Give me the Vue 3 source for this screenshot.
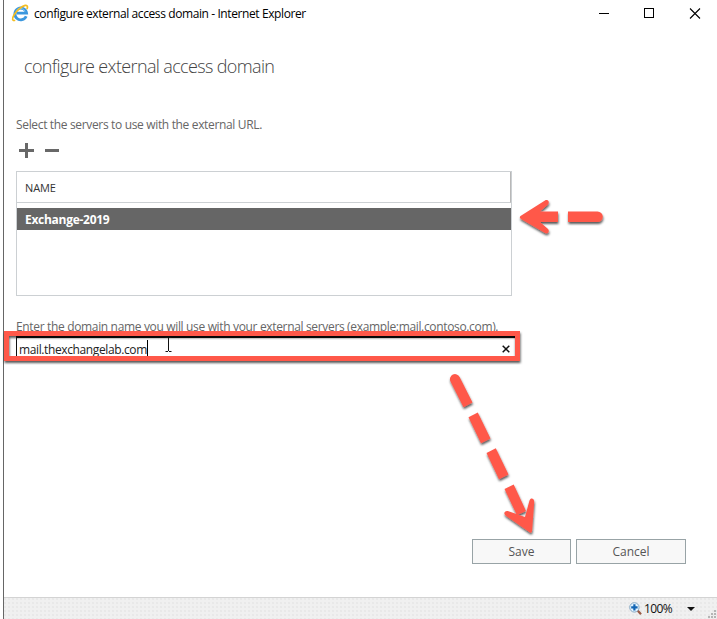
<script setup>
import { ref } from 'vue'

const servers = ref(['Exchange-2019'])
const domain = ref('mail.thexchangelab.com')
</script>

<template>
  <div class="window">
    <header class="titlebar">
      <svg class="logo" width="18" height="18" viewBox="0 0 18 18">
        <path d="M15.200 12.200A5.900 5.900 0 1 1 15.600 9.200H5.600" fill="none" stroke="#3b97de" stroke-width="2.800" />
        <path d="M14.200 7.400A5.200 5.200 0 0 0 5 6.800" fill="none" stroke="#75c5f5" stroke-width="1" />
        <path d="M4.200 16.300C1.200 17.300 .8 14.700 3 11C5.500 6.700 10.500 2.300 14.200 1.400C16.600 .9 17 2.900 15.900 5.200" fill="none" stroke="#f3bd22" stroke-width="1.700" />
      </svg>
      <span class="title">configure external access domain - Internet Explorer</span>
      <svg class="controls" width="104" height="12" viewBox="0 0 104 12" fill="none" stroke="#000">
        <path d="M0 5.500H10" />
        <rect x="45.500" y=".5" width="9" height="9" />
        <path d="M91 0.500L101 10.500M101 .5L91 10.500" stroke-width="1.100" />
      </svg>
    </header>

    <main class="content">
      <h1><span>configure external access domain</span></h1>
      <p class="label select-label">Select the servers to use with the external URL.</p>
      <div class="tools">
        <svg width="42" height="16" viewBox="0 0 42 16" fill="none" stroke="#686868" stroke-width="3">
          <path d="M0 8.500H15M7.500 1V16M26 8.500H40" />
        </svg>
      </div>
      <section class="grid">
        <div class="grid-head"><span>NAME</span></div>
        <div v-for="server in servers" :key="server" class="grid-row"><span>{{ server }}</span></div>
      </section>
      <p class="label domain-label">Enter the domain name you will use with your external servers (example:mail.contoso.com).</p>
      <div class="field">
        <span class="value">{{ domain }}</span><i class="caret"></i>
        <svg class="clear" width="8" height="8" viewBox="0 0 8 8"><path d="M.7.7L7.3 7.3M7.3.7L.7 7.3" stroke="#111" stroke-width="1.500" /></svg>
      </div>
      <div class="actions">
        <button class="save"><span>Save</span></button>
        <button class="cancel"><span>Cancel</span></button>
      </div>
    </main>

    <footer class="statusbar">
      <svg class="zoom-icon" width="14" height="14" viewBox="0 0 14 14">
        <path d="M8.600 8.500L12 12.200" stroke="#9a5b45" stroke-width="2.300" />
        <circle cx="5.400" cy="5.400" r="4.700" fill="#e4f4ff" stroke="#87a9c4" />
        <path d="M5.400 2.200V8.600M2.200 5.400H8.600" stroke="#1265b4" stroke-width="2.200" />
      </svg>
      <span class="percent">100%</span>
      <svg class="chevron" width="8" height="4" viewBox="0 0 8 4"><path d="M0 0H8L4 4Z" fill="#111" /></svg>
      <svg class="grip" width="9" height="9" viewBox="0 0 9 9" fill="#b5b5b5">
        <path d="M6 0h2v2H6zM3 3h2v2H3zM6 3h2v2H6zM0 6h2v2H0zM3 6h2v2H3zM6 6h2v2H6z" />
      </svg>
    </footer>

    <svg class="annotations" width="717" height="619" viewBox="0 0 717 619">
      <defs>
        <filter id="shadow" x="-20%" y="-20%" width="140%" height="150%">
          <feDropShadow dx="0.5" dy="2" stdDeviation="0.9" flood-color="#000" flood-opacity=".65" />
        </filter>
      </defs>
      <g filter="url(#shadow)">
        <rect x="6.500" y="333.500" width="511" height="25" fill="none" stroke="#ff584a" stroke-width="5" />
      </g>
      <path d="M168.500 338V351M165.500 337.500H168M169 337.500H171.500M165.500 351.500H168M169 351.500H171.500" fill="none" stroke="#111" />
      <g filter="url(#shadow)" fill="#ff584a">
        <path d="M520.500 216C519.500 217 519.500 218 521 219L545 233C548 234.500 550 231 548 229L540 222H558V211.500H540L548 204.500C550 202 548 199 545 200.500Z" />
        <path d="M568 211.500H597.500A5.250 5.250 0 0 1 597.500 222H568Z" />
      </g>
      <g filter="url(#shadow)" fill="#ff584a">
        <path d="M450.400 381.300A5 5 0 0 1 459.600 377L472.500 402.500L463.500 407.300Z" />
        <path d="M468.500 417.200L477.800 412.600L490.500 438.500L481 443.300Z" />
        <path d="M486.500 453L495.800 448.300L508.500 474.500L499 479.300Z" />
        <path d="M504.500 489L513.700 484.500L526 511L517 515.200Z" />
        <path d="M532 531.500L534.200 502C534.300 498 530.500 497.300 529.500 500.500L525 517L508.500 511.200C505 510 502.800 513.300 505.500 515.500L528.500 531.500C530 533 531.700 533 532 531.500Z" />
      </g>
    </svg>
  </div>
</template>

<style>
body {
  margin: 0;
  background: #fff;
}
</style>

<style scoped>
.window {
  position: relative;
  box-sizing: border-box;
  width: 717px;
  height: 619px;
  padding-left: 3px;
  overflow: hidden;
  display: flex;
  flex-direction: column;
  font-family: "Open Sans", "Noto Sans", sans-serif;
  color: #666;
  background: linear-gradient(90deg, transparent 3px, #666 3px 4px, #fff 4px);
}
span, .label { white-space: nowrap; }
.titlebar {
  height: 28px;
  display: flex;
  align-items: center;
  padding-left: 8px;
  color: #000;
  font-size: 12px;
}
.logo { margin-top: -2px; }
.title {
  margin-left: 5px;
  margin-top: -1px;
  letter-spacing: -.4px;
}
.controls { margin-left: auto; margin-right: 14px; margin-top: -1px; }
.content {
  display: flex;
  flex-direction: column;
  padding-left: 13px;
  height: 569px;
}
h1 {
  margin: 25px 0 0 8px;
  font-size: 18px;
  line-height: 26px;
  font-weight: 300;
  letter-spacing: -.64px;
  color: #444;
}
.label {
  margin: 0;
  font-size: 12px;
  line-height: 18px;
  letter-spacing: -.34px;
}
.select-label { margin-top: 37px; }
.tools { height: 37px; padding: 8px 0 0 3px; box-sizing: border-box; }
.tools svg { display: block; }
.grid {
  box-sizing: border-box;
  width: 496px;
  height: 125px;
  border: 1px solid #ccd0d3;
}
.grid-head {
  display: flex;
  align-items: center;
  box-sizing: border-box;
  height: 31px;
  padding-left: 8px;
  margin-bottom: 5px;
  border-bottom: 1px solid #ccd0d3;
  border-right: 1px solid #b8b8b8;
  color: #333;
  font-size: 11px;
  letter-spacing: -.1px;
}
.grid-row {
  display: flex;
  align-items: center;
  height: 22px;
  padding-left: 8px;
  background: #666;
  color: #fff;
  font-size: 12px;
  font-weight: 700;
  letter-spacing: -.28px;
}
.domain-label { margin-top: 22px; }
.field {
  display: flex;
  align-items: center;
  box-sizing: border-box;
  width: 499px;
  height: 22px;
  border-left: 1px solid #111;
  border-top: 2px solid #111;
  padding-left: 2px;
  padding-right: 5px;
  color: #222;
  font-size: 12px;
  letter-spacing: -.38px;
}
.value { padding-top: 2px; }
.caret { width: 1px; height: 16px; background: #000; }
.clear { margin-left: auto; margin-top: 1px; }
.actions {
  display: flex;
  gap: 5px;
  margin-top: 181px;
  padding-left: 456px;
}
button {
  box-sizing: border-box;
  height: 25px;
  padding: 0;
  border: 1px solid #98a3a6;
  border-radius: 0;
  background: #f8f8f8;
  color: #555;
  font: 12px/20px "Open Sans", sans-serif;
}
.save { width: 99px; }
.cancel { width: 110px; }
.statusbar {
  box-sizing: border-box;
  height: 22px;
  margin-left: 1px;
  border-top: 1px solid #d3d3d3;
  display: flex;
  align-items: center;
  padding-left: 625px;
  background: #f0f0f0 radial-gradient(circle at 1px 1px, #e8e8e8 .7px, transparent 1px) 0 0 / 4px 4px;
  color: #111;
  font-size: 12px;
}
.percent { margin-left: 1px; letter-spacing: -.6px; }
.chevron { margin-left: 15px; }
.grip { margin-left: auto; align-self: flex-end; }
.annotations {
  position: absolute;
  inset: 0;
  pointer-events: none;
}
</style>
